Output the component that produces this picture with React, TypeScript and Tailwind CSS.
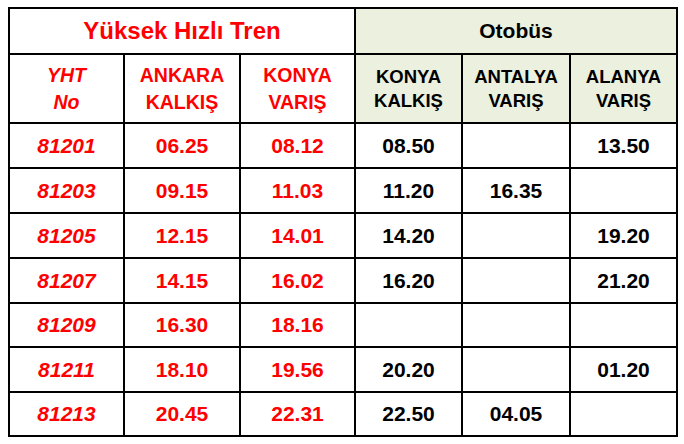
import React from "react";

const rows: [string, string, string, string, string, string][] = [
  ["81201", "06.25", "08.12", "08.50", "", "13.50"],
  ["81203", "09.15", "11.03", "11.20", "16.35", ""],
  ["81205", "12.15", "14.01", "14.20", "", "19.20"],
  ["81207", "14.15", "16.02", "16.20", "", "21.20"],
  ["81209", "16.30", "18.16", "", "", ""],
  ["81211", "18.10", "19.56", "20.20", "", "01.20"],
  ["81213", "20.45", "22.31", "22.50", "04.05", ""],
];

export default function App() {
  return (
    <div
      className="w-[684px] h-[444px] bg-white pl-[8px] pt-[7px]"
      style={{ fontFamily: '"Liberation Sans", Arial, sans-serif' }}
    >
      <div className="inline-grid bg-black gap-[2px] p-[2px] grid-cols-[113px_114px_113px_105px_106px_105px] grid-rows-[44px_67px_43px_43px_43px_43px_42px_43px_42px]">
        <div className="col-span-3 bg-white flex items-center justify-center text-[#ff0000] font-bold text-[24px]">
          Yüksek Hızlı Tren
        </div>
        <div className="col-span-3 bg-[#ecf0df] flex items-center justify-center text-black font-bold text-[21px]">
          Otobüs
        </div>

        <div className="bg-white flex items-center justify-center text-center text-[#ff0000] font-bold italic text-[19.5px] leading-[27px]">
          YHT<br />No
        </div>
        <div className="bg-white flex items-center justify-center text-center text-[#ff0000] font-bold text-[19.5px] leading-[27px]">
          ANKARA<br />KALKIŞ
        </div>
        <div className="bg-white flex items-center justify-center text-center text-[#ff0000] font-bold text-[19.5px] leading-[27px]">
          KONYA<br />VARIŞ
        </div>
        <div className="bg-[#ecf0df] flex items-center justify-center text-center text-black font-bold text-[18.5px] leading-[24px]">
          KONYA<br />KALKIŞ
        </div>
        <div className="bg-[#ecf0df] flex items-center justify-center text-center text-black font-bold text-[18.5px] leading-[24px]">
          ANTALYA<br />VARIŞ
        </div>
        <div className="bg-[#ecf0df] flex items-center justify-center text-center text-black font-bold text-[18.5px] leading-[24px]">
          ALANYA<br />VARIŞ
        </div>

        {rows.map((r) => (
          <React.Fragment key={r[0]}>
            <div className="bg-white flex items-center justify-center text-[#ff0000] font-bold italic text-[21px]">
              {r[0]}
            </div>
            <div className="bg-white flex items-center justify-center text-[#ff0000] font-bold text-[21px]">
              {r[1]}
            </div>
            <div className="bg-white flex items-center justify-center text-[#ff0000] font-bold text-[21px]">
              {r[2]}
            </div>
            <div className="bg-white flex items-center justify-center text-black font-bold text-[21px]">
              {r[3]}
            </div>
            <div className="bg-white flex items-center justify-center text-black font-bold text-[21px]">
              {r[4]}
            </div>
            <div className="bg-white flex items-center justify-center text-black font-bold text-[21px]">
              {r[5]}
            </div>
          </React.Fragment>
        ))}
      </div>
    </div>
  );
}
